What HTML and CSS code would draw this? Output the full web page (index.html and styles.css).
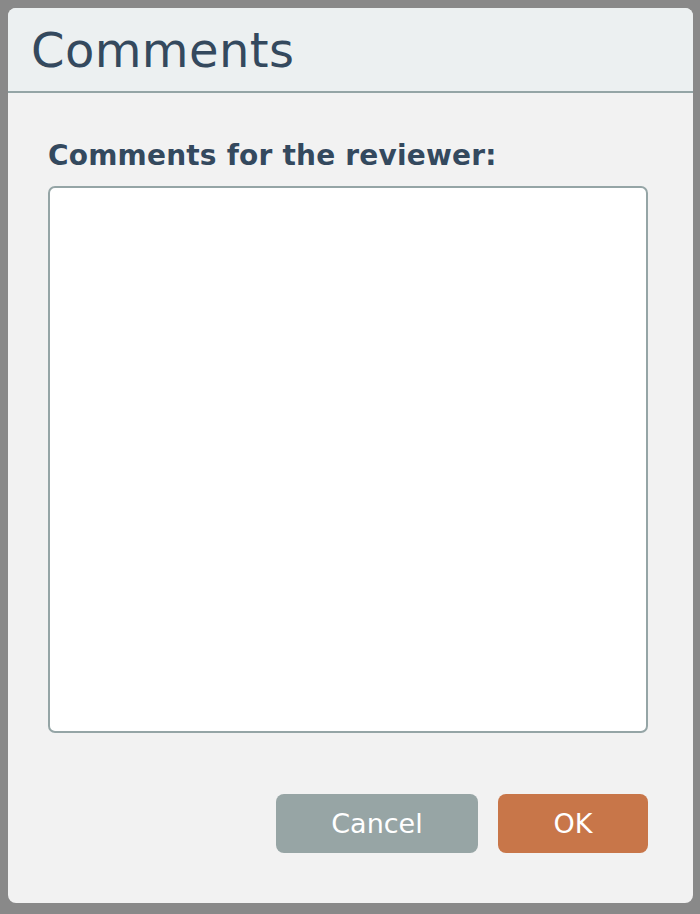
FILE: index.html
```html
<!DOCTYPE html>
<html>
<head>
<meta charset="utf-8">
<link rel="stylesheet" href="styles.css">
</head>
<body>
<div class="dialog">
  <div class="dialog-header">
    <h1 class="dialog-title">Comments</h1>
  </div>
  <div class="dialog-body">
    <label class="field-label" for="c">Comments for the reviewer:</label>
    <textarea id="c" class="field-input"></textarea>
    <div class="actions">
      <button class="btn btn-cancel">Cancel</button>
      <button class="btn btn-ok">OK</button>
    </div>
  </div>
</div>
</body>
</html>
```
FILE: styles.css
```css
html, body {
  margin: 0;
  padding: 0;
}
body {
  background: #898989;
  padding: 8px;
  font-family: "DejaVu Sans", Verdana, sans-serif;
  color: #34495e;
}
.dialog {
  width: 685px;
  height: 895px;
  background: #f2f2f2;
  border-radius: 8px;
  overflow: hidden;
  display: flex;
  flex-direction: column;
}
.dialog-header {
  height: 83px;
  background: #ecf0f1;
  border-bottom: 2px solid #95a5a6;
  display: flex;
  align-items: center;
  padding: 0 23px;
  flex-shrink: 0;
}
.dialog-title {
  margin: 0;
  font-size: 48px;
  font-weight: normal;
  line-height: 1;
  letter-spacing: 0.4px;
  color: #34495e;
}
.dialog-body {
  padding: 46px 45px 0 40px;
  display: flex;
  flex-direction: column;
}
.field-label {
  font-size: 28px;
  font-weight: bold;
  line-height: 34px;
  letter-spacing: 0.2px;
  margin-bottom: 13px;
}
.field-input {
  box-sizing: border-box;
  width: 600px;
  height: 547px;
  border: 2px solid #95a5a6;
  border-radius: 7px;
  background: #fff;
  resize: none;
  margin: 0;
  padding: 6px;
  font-family: inherit;
  font-size: 20px;
  outline: none;
}
.actions {
  display: flex;
  justify-content: flex-end;
  gap: 20px;
  margin-top: 61px;
  width: 600px;
}
.btn {
  height: 59px;
  border: none;
  border-radius: 8px;
  color: #fff;
  font-family: inherit;
  font-size: 27px;
  padding: 0;
  cursor: pointer;
}
.btn-cancel {
  width: 202px;
  background: #97a5a5;
}
.btn-ok {
  width: 150px;
  background: #c87649;
}
```
